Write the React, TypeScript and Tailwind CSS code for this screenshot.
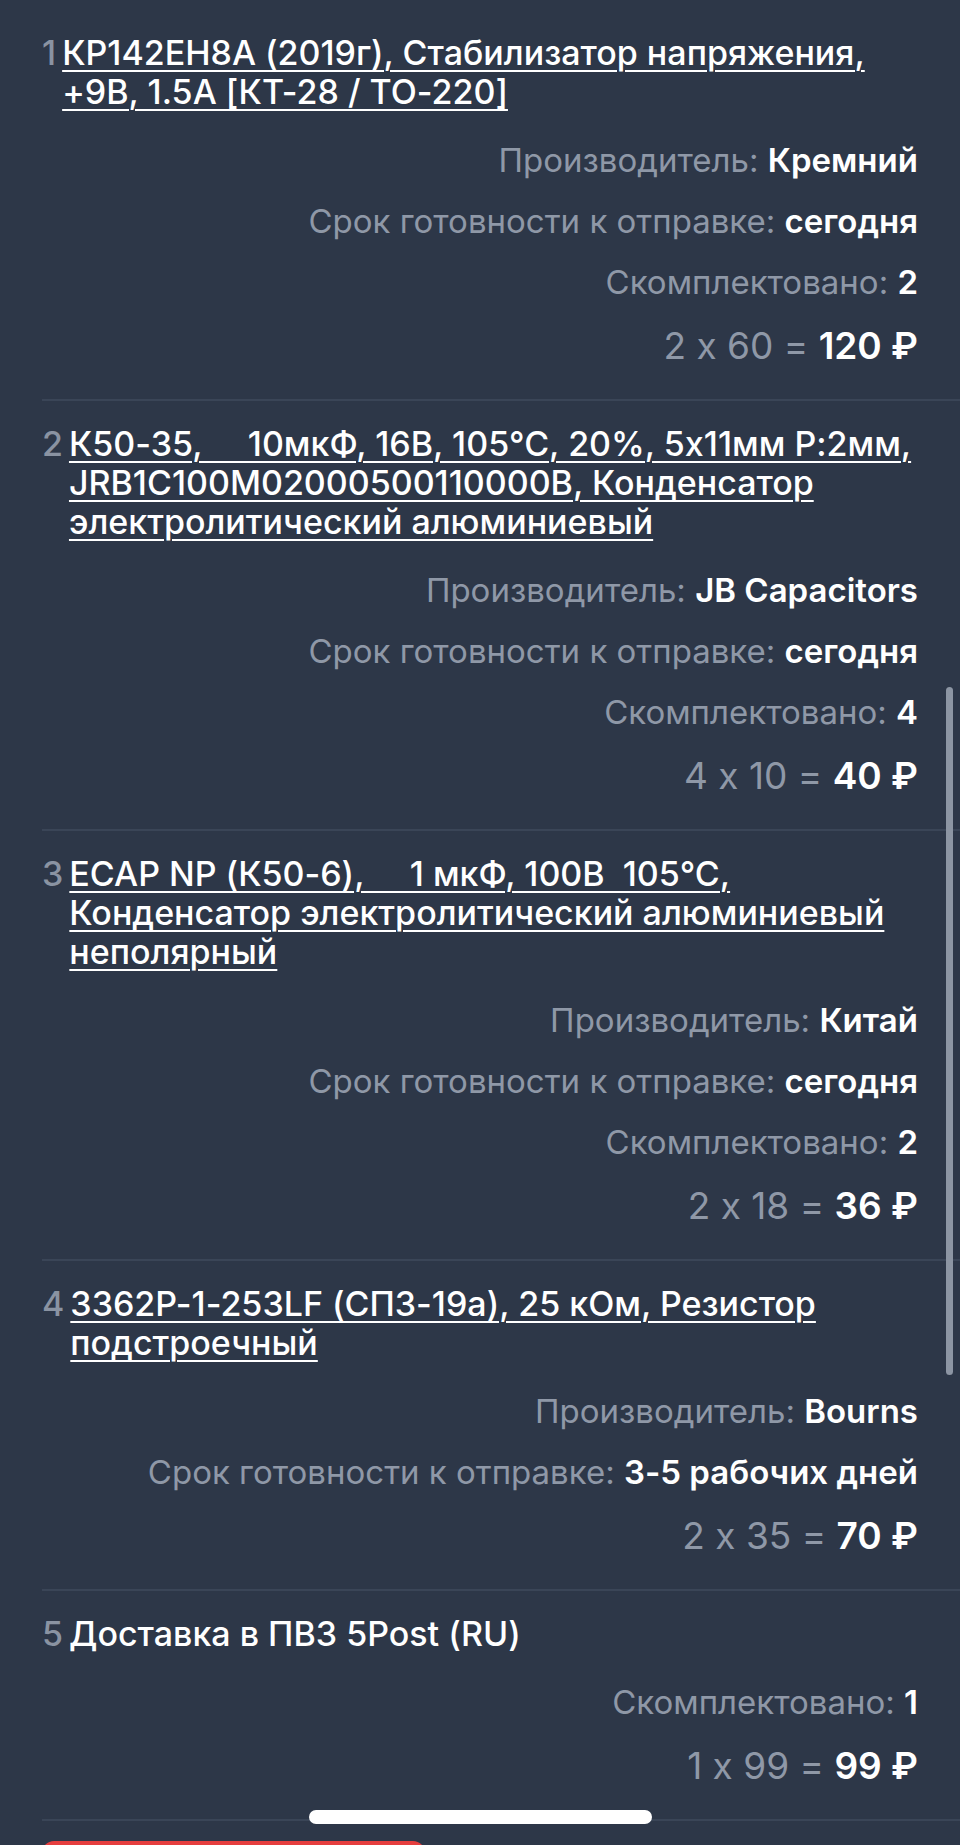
import React from 'react';

type Item = {
  n: number;
  title: string;
  link: boolean;
  maker?: string;
  ready?: string;
  packed?: number;
  qty: number;
  price: number;
};

const items: Item[] = [
  {
    n: 1,
    title: 'КР142ЕН8А (2019г), Стабилизатор напряжения, +9В, 1.5А [КТ-28 / ТО-220]',
    link: true,
    maker: 'Кремний',
    ready: 'сегодня',
    packed: 2,
    qty: 2,
    price: 60,
  },
  {
    n: 2,
    title:
      'К50-35,\u00a0\u00a0\u00a0\u00a0 10мкФ, 16В, 105°С, 20%, 5x11мм P:2мм, JRB1C100M02000500110000B, Конденсатор электролитический алюминиевый',
    link: true,
    maker: 'JB Capacitors',
    ready: 'сегодня',
    packed: 4,
    qty: 4,
    price: 10,
  },
  {
    n: 3,
    title:
      'ECAP NP (К50-6),\u00a0\u00a0\u00a0\u00a0 1 мкФ, 100В\u00a0 105°С, Конденсатор электролитический алюминиевый неполярный',
    link: true,
    maker: 'Китай',
    ready: 'сегодня',
    packed: 2,
    qty: 2,
    price: 18,
  },
  {
    n: 4,
    title: '3362P-1-253LF (СП3-19а), 25 кОм, Резистор подстроечный',
    link: true,
    maker: 'Bourns',
    ready: '3-5 рабочих дней',
    qty: 2,
    price: 35,
  },
  {
    n: 5,
    title: 'Доставка в ПВЗ 5Post (RU)',
    link: false,
    packed: 1,
    qty: 1,
    price: 99,
  },
];

const Row = ({ label, value }: { label: string; value: React.ReactNode }) => (
  <div className="text-[33px] leading-[39px]">
    <span className="text-[#8f98a7]">{label}: </span>
    <span className="font-semibold text-white">{value}</span>
  </div>
);

export default function App() {
  return (
    <div className="relative h-[1845px] overflow-hidden bg-[#2d3748] font-['Inter','Noto_Sans',sans-serif] antialiased [font-feature-settings:'calt'_0]">
      <div className="pt-[10px]">
        {items.map((it) => (
          <div key={it.n} className="ml-[42px] border-b-2 border-[#3a4557] pt-[23px] pb-[31px] pr-[42px]">
            <div className="flex gap-[6px] text-[34px] leading-[39px] font-medium">
              <span className="text-[#8a93a2]">{it.n}</span>
              {it.link ? (
                <a href="#" className="text-white underline decoration-2 underline-offset-[5px]">
                  {it.title}
                </a>
              ) : (
                <span className="text-white">{it.title}</span>
              )}
            </div>
            <div className="mt-[30px] flex flex-col items-end gap-[22px]">
              {it.maker && <Row label="Производитель" value={it.maker} />}
              {it.ready && <Row label="Срок готовности к отправке" value={it.ready} />}
              {it.packed !== undefined && <Row label="Скомплектовано" value={it.packed} />}
              <div className="text-[37px] leading-[44px]">
                <span className="text-[#8f98a7]">
                  {it.qty} x {it.price} ={' '}
                </span>
                <span className="font-semibold text-white">{it.qty * it.price} ₽</span>
              </div>
            </div>
          </div>
        ))}
        <div className="ml-[42px] mt-[20px] h-[60px] w-[383px] rounded-t-xl bg-[#e53e3e]" />
      </div>

      {/* overlays: scroll indicator and home bar */}
      <div className="absolute right-[7px] top-[687px] h-[688px] w-[7px] rounded-full bg-[#8c95a3]" />
      <div className="absolute left-[309px] top-[1810px] h-[14px] w-[343px] rounded-full bg-white" />
    </div>
  );
}
